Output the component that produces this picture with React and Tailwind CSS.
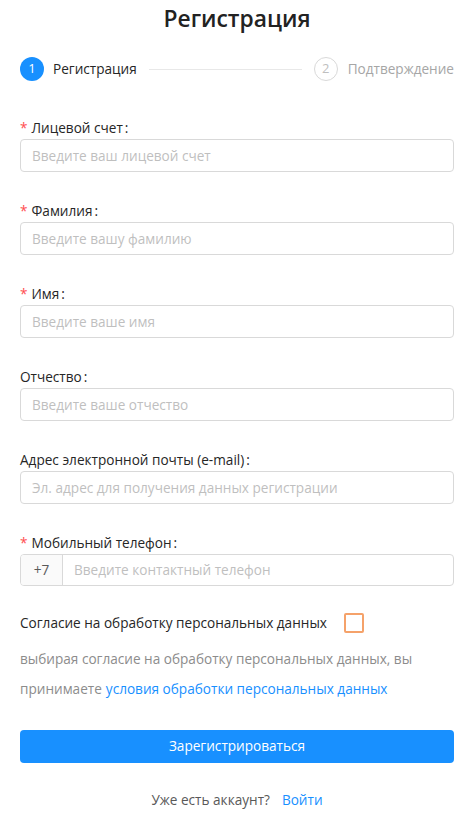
import React, { useState } from "react";

const fields = [
  { label: "Лицевой счет", placeholder: "Введите ваш лицевой счет", required: true },
  { label: "Фамилия", placeholder: "Введите вашу фамилию", required: true },
  { label: "Имя", placeholder: "Введите ваше имя", required: true },
  { label: "Отчество", placeholder: "Введите ваше отчество", required: false },
  {
    label: "Адрес электронной почты (e-mail)",
    placeholder: "Эл. адрес для получения данных регистрации",
    required: false,
  },
];

function Label({ text, required }) {
  return (
    <div className="h-[22px] leading-[22px] text-[13.6px] text-[#262626]">
      {required && <span className="text-[#ff4d4f] mr-[4px]">*</span>}
      {text}
      <span className="ml-[2px]">:</span>
    </div>
  );
}

export default function App() {
  const [agree, setAgree] = useState(false);

  return (
    <div
      className="w-[474px] min-h-[815px] bg-white px-[20px] flex flex-col"
      style={{ fontFamily: '"Open Sans", "Noto Sans", sans-serif' }}
    >
      {/* Заголовок */}
      <h1 className="text-center text-[22.8px] leading-[32px] font-semibold text-[#222222] pt-[3px]">
        Регистрация
      </h1>

      {/* Шаги */}
      <div className="flex items-center mt-[22px] h-[24px] text-[13.6px]">
        <div className="w-[24px] h-[24px] rounded-full bg-[#1890ff] text-white flex items-center justify-center text-[13px]">
          1
        </div>
        <span className="ml-[9px] text-[#262626] font-medium">Регистрация</span>
        <div className="flex-1 h-px bg-[#e8e8e8] mx-[12px]" />
        <div className="w-[24px] h-[24px] rounded-full border border-[#d9d9d9] text-[#bfbfbf] flex items-center justify-center text-[13px]">
          2
        </div>
        <span className="ml-[10px] text-[#a6a6a6]">Подтверждение</span>
      </div>

      {/* Поля формы */}
      <div className="mt-[36px] flex flex-col gap-[28px]">
        {fields.map((f) => (
          <div key={f.label}>
            <Label text={f.label} required={f.required} />
            <input
              type="text"
              placeholder={f.placeholder}
              className="w-full h-[33px] border border-[#d9d9d9] rounded-[4px] px-[11px] text-[13.6px] placeholder:text-[#bfbfbf] outline-none"
            />
          </div>
        ))}
        <div>
          <Label text="Мобильный телефон" required />
          <div className="flex h-[32px] border border-[#d9d9d9] rounded-[4px] overflow-hidden">
            <div className="w-[42px] bg-[#fafafa] border-r border-[#d9d9d9] flex items-center justify-center text-[13.6px] text-[#595959]">
              +7
            </div>
            <input
              type="text"
              placeholder="Введите контактный телефон"
              className="flex-1 px-[11px] text-[13.6px] placeholder:text-[#bfbfbf] outline-none"
            />
          </div>
        </div>
      </div>

      {/* Согласие */}
      <div className="mt-[26px] flex items-center h-[22px] text-[13.6px] text-[#262626]">
        <span>Согласие на обработку персональных данных</span>
        <button
          onClick={() => setAgree(!agree)}
          className="ml-[17px] w-[20px] h-[20px] border-2 border-[#f5a26a] rounded-[2px]"
        />
      </div>
      <div className="mt-[10px] text-[13.6px] leading-[30px] text-[#8c8c8c]">
        <div>выбирая согласие на обработку персональных данных, вы</div>
        <div className="flex gap-[4px]">
          <span>принимаете</span>
          <a className="text-[#1890ff]">условия обработки персональных данных</a>
        </div>
      </div>

      <button className="mt-[26px] h-[33px] w-full bg-[#1890ff] text-white text-[13.6px] rounded-[4px]">
        Зарегистрироваться
      </button>

      <div className="mt-[27px] flex justify-center text-[13.6px] text-[#595959]">
        <span>Уже есть аккаунт?</span>
        <a className="ml-[12px] text-[#1890ff]">Войти</a>
      </div>
    </div>
  );
}
